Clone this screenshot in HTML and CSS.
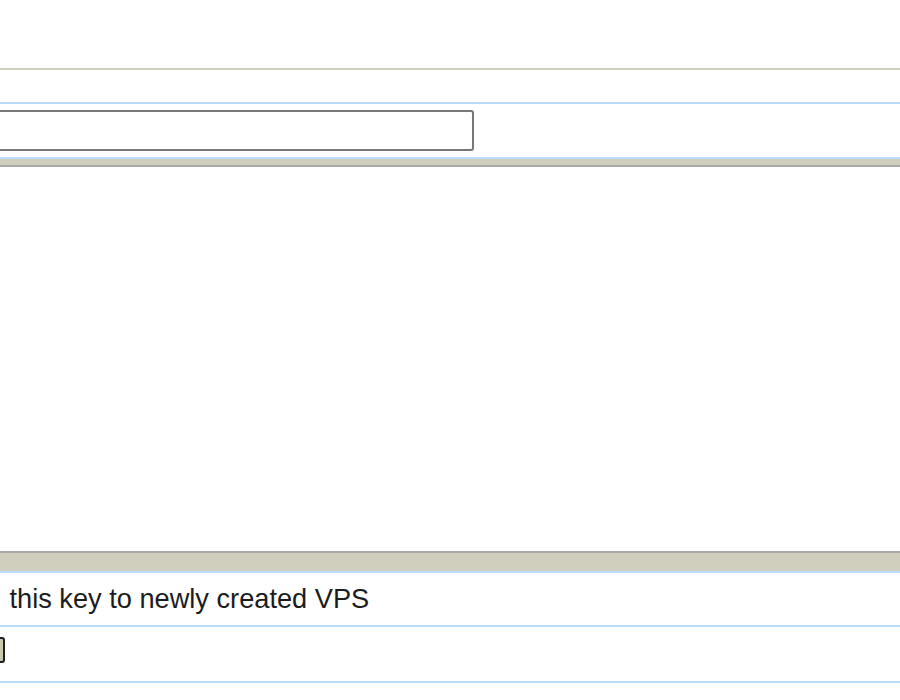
FILE: index.html
```html
<!DOCTYPE html>
<html>
<head>
<meta charset="utf-8">
<link rel="stylesheet" href="styles.css">
</head>
<body>
<div class="sheet">
  <div class="top"></div>
  <div class="row blank"></div>
  <div class="row field"><input class="name" type="text"></div>
  <div class="band band-top"></div>
  <div class="area"></div>
  <div class="band band-bottom"></div>
  <div class="row text">this key to newly created VPS</div>
  <div class="row actions"><button class="save" type="button" aria-label="Save"></button></div>
</div>
</body>
</html>
```
FILE: styles.css
```css
html, body {
  margin: 0;
  padding: 0;
  background: #ffffff;
  overflow: hidden;
}
.sheet {
  display: flex;
  flex-direction: column;
  width: 900px;
  font-family: "Liberation Sans", Arial, sans-serif;
  font-size: 27.2px;
  color: #1c1c1c;
}
.top {
  height: 68px;
  border-bottom: 2px solid #d0cfbd;
}
.row {
  border-bottom: 2px solid #b9dcfd;
}
.blank {
  height: 32px;
}
.field {
  height: 53px;
  display: flex;
  align-items: flex-start;
}
.name {
  margin: 6px 0 0 -12px;
  width: 486px;
  height: 41px;
  box-sizing: border-box;
  border: 2px solid #777777;
  border-radius: 3px;
  background: #ffffff;
  padding: 0;
}
.band {
  background: #d0cfbd;
}
.band-top {
  height: 6px;
  border-bottom: 2px solid #a9a9a9;
}
.area {
  height: 384px;
}
.band-bottom {
  height: 18px;
  border-top: 2px solid #a9a9a9;
  border-bottom: 2px solid #b9dcfd;
}
.text {
  height: 52px;
  padding: 11px 0 0 9.5px;
  box-sizing: border-box;
  min-height: 52px;
  line-height: 30px;
  white-space: nowrap;
  flex: 0 0 54px;
}
.actions {
  height: 54px;
  display: flex;
  align-items: flex-start;
}
.save {
  margin: 10px 0 0 -86px;
  width: 91px;
  height: 26px;
  box-sizing: border-box;
  border: 2px solid #1e1e1e;
  border-radius: 3px;
  background: #c9c7ad;
  padding: 0;
}
```
